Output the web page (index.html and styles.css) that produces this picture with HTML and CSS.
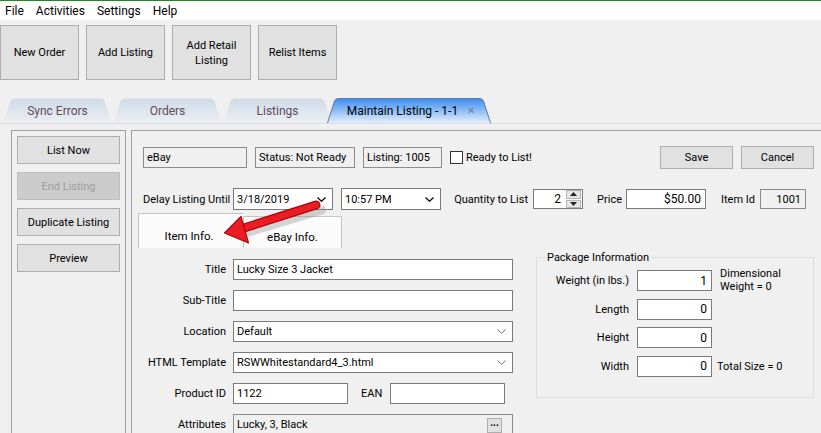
FILE: index.html
```html
<!DOCTYPE html>
<html lang="en">
<head>
  <meta charset="UTF-8" />
  <title>Maintain Listing</title>
  <link rel="stylesheet" href="styles.css">
</head>
<body>
  <div class="menubar">
    <span>File</span>
    <span>Activities</span>
    <span>Settings</span>
    <span>Help</span>
  </div>

  <div class="toolbar">
    <button class="tool">New Order</button>
    <button class="tool">Add Listing</button>
    <button class="tool">Add Retail<br>Listing</button>
    <button class="tool">Relist Items</button>
  </div>

  <div class="tabs">
    <div class="tab">
      <svg class="tab-shape" width="109" height="25" viewBox="0 0 109 25">
        <defs>
          <linearGradient id="tabIdle" x1="0" y1="0" x2="0" y2="1">
            <stop offset="0" stop-color="#cfdbe8"/>
            <stop offset="1" stop-color="#eceff3"/>
          </linearGradient>
          <linearGradient id="tabActive" x1="0" y1="0" x2="0" y2="1">
            <stop offset="0" stop-color="#3a8cf0"/>
            <stop offset="1" stop-color="#e4effc"/>
          </linearGradient>
        </defs>
        <path d="M0.5 25 L7.5 3 Q8.5 0.5 11.5 0.5 L97.5 0.5 Q100.5 0.5 101.5 3 L108.5 25 Z" fill="url(#tabIdle)"/>
      </svg>
      <span>Sync Errors</span>
    </div>
    <div class="tab">
      <svg class="tab-shape" width="109" height="25" viewBox="0 0 109 25">
        <path d="M0.5 25 L7.5 3 Q8.5 0.5 11.5 0.5 L97.5 0.5 Q100.5 0.5 101.5 3 L108.5 25 Z" fill="url(#tabIdle)"/>
      </svg>
      <span>Orders</span>
    </div>
    <div class="tab">
      <svg class="tab-shape" width="109" height="25" viewBox="0 0 109 25">
        <path d="M0.5 25 L7.5 3 Q8.5 0.5 11.5 0.5 L97.5 0.5 Q100.5 0.5 101.5 3 L108.5 25 Z" fill="url(#tabIdle)"/>
      </svg>
      <span>Listings</span>
    </div>
    <div class="tab active">
      <svg class="tab-shape" width="164" height="25" viewBox="0 0 164 25">
        <path d="M0.5 25 L7.5 3 Q8.5 0.5 11.5 0.5 L152.5 0.5 Q155.5 0.5 156.5 3 L163.5 25" fill="url(#tabActive)" stroke="#62799a"/>
      </svg>
      <span>Maintain Listing - 1-1</span>
      <span class="close">&#x2715;</span>
    </div>
  </div>
  <div class="tabline"></div>

  <div class="workspace">
    <aside class="side">
      <button class="btn">List Now</button>
      <button class="btn" disabled>End Listing</button>
      <button class="btn">Duplicate Listing</button>
      <button class="btn">Preview</button>
    </aside>

    <main class="editor">
      <div class="head">
        <div class="ro w-site">eBay</div>
        <div class="ro w-status">Status: Not Ready</div>
        <div class="ro w-listing">Listing: 1005</div>
        <label class="check"><span class="box"></span>Ready to List!</label>
        <button class="btn act save">Save</button>
        <button class="btn act">Cancel</button>
      </div>

      <div class="delay">
        <span class="lbl-delay">Delay Listing Until</span>
        <div class="select w-date">
          <span>3/18/2019</span>
          <svg width="9" height="5" viewBox="0 0 9 5"><path d="M0.5 0.5 L4.5 4.3 L8.5 0.5" fill="none" stroke="#111" stroke-width="1.3"/></svg>
        </div>
        <div class="select w-time">
          <span>10:57 PM</span>
          <svg width="9" height="5" viewBox="0 0 9 5"><path d="M0.5 0.5 L4.5 4.3 L8.5 0.5" fill="none" stroke="#111" stroke-width="1.3"/></svg>
        </div>
        <span class="lbl-qty">Quantity to List</span>
        <div class="spin">
          <span class="spin-val">2</span>
          <div class="spin-btns">
            <span class="spin-up"><svg width="7" height="4" viewBox="0 0 7 4"><path d="M0 4 L3.5 0 L7 4 Z" fill="#222"/></svg></span>
            <span class="spin-down"><svg width="7" height="4" viewBox="0 0 7 4"><path d="M0 0 L3.5 4 L7 0 Z" fill="#222"/></svg></span>
          </div>
        </div>
        <span class="lbl-price">Price</span>
        <div class="input num w-price">$50.00</div>
        <span class="lbl-id">Item Id</span>
        <div class="ro num w-id">1001</div>
      </div>

      <div class="subtabs">
        <div class="subtab selected">Item Info.</div>
        <div class="subtab">eBay Info.</div>
      </div>

      <div class="page">
        <div class="form">
          <label>Title</label>
          <div class="input">Lucky Size 3 Jacket</div>

          <label>Sub-Title</label>
          <div class="input"></div>

          <label>Location</label>
          <div class="select">
            <span>Default</span>
            <svg width="9" height="5" viewBox="0 0 9 5"><path d="M0.5 0.5 L4.5 4.3 L8.5 0.5" fill="none" stroke="#6a6a6a" stroke-width="1"/></svg>
          </div>

          <label>HTML Template</label>
          <div class="select">
            <span>RSWWhitestandard4_3.html</span>
            <svg width="9" height="5" viewBox="0 0 9 5"><path d="M0.5 0.5 L4.5 4.3 L8.5 0.5" fill="none" stroke="#6a6a6a" stroke-width="1"/></svg>
          </div>

          <label>Product ID</label>
          <div class="pair">
            <div class="input w-code">1122</div>
            <span class="lbl-ean">EAN</span>
            <div class="input w-code"></div>
          </div>

          <label>Attributes</label>
          <div class="ro attrs">
            <span>Lucky, 3, Black</span>
            <span class="dots">...</span>
          </div>
        </div>

        <fieldset class="package">
          <legend>Package Information</legend>
          <div class="pkg-grid">
            <label>Weight (in lbs.)</label>
            <div class="input num">1</div>
            <span class="note">Dimensional<br>Weight = 0</span>

            <label>Length</label>
            <div class="input num">0</div>
            <span></span>

            <label>Height</label>
            <div class="input num">0</div>
            <span></span>

            <label>Width</label>
            <div class="input num">0</div>
            <span class="note total">Total Size = 0</span>
          </div>
        </fieldset>
      </div>
    </main>
  </div>

  <svg class="pointer" width="821" height="433" viewBox="0 0 821 433">
    <path d="M247 230 L320 208" stroke="#8a8a8a" stroke-opacity="0.35" stroke-width="9" stroke-linecap="round" transform="translate(1.5 2)"/>
    <path d="M244 228 L316 205" stroke="#a8080c" stroke-width="9" stroke-linecap="round"/>
    <path d="M244 228 L316 205" stroke="#ec1c24" stroke-width="6.5" stroke-linecap="round"/>
    <path d="M224.5 233 L241 216.5 L248.5 243 Z" fill="#ec1c24" stroke="#a8080c" stroke-width="1.2" stroke-linejoin="round"/>
  </svg>
</body>
</html>
```

FILE: styles.css
```css
* {
  box-sizing: border-box;
}

html,
body {
  margin: 0;
  padding: 0;
}

body {
  font-family: Roboto, 'Noto Sans', sans-serif;
  font-size: 11px;
  color: #000;
  background-color: #f0f0f0;
  width: 821px;
  height: 433px;
  overflow: hidden;
  position: relative;
  white-space: nowrap;
}

/* Menu + toolbar */
.menubar {
  display: flex;
  align-items: center;
  gap: 12px;
  height: 20px;
  padding-left: 5px;
  background: #fff;
  border-top: 1px solid #1d8a1d;
  font-size: 12px;
}

.toolbar {
  display: flex;
  gap: 7px;
  padding-top: 5px;
}

button {
  font-family: inherit;
  font-size: 11px;
  color: #000;
  padding: 0;
  margin: 0;
}

.tool {
  width: 79px;
  height: 55px;
  line-height: 15px;
  background: #e1e1e1;
  border: 1px solid #adadad;
}

/* Document tabs */
.tabs {
  display: flex;
  gap: 1px;
  height: 25px;
  margin-top: 18px;
  padding-left: 3px;
}

.tab {
  position: relative;
  width: 109px;
  display: flex;
  align-items: center;
  justify-content: center;
  gap: 9px;
  font-size: 12px;
  color: #5e4c5c;
}

.tab span {
  position: relative;
}

.tab-shape {
  position: absolute;
  left: 0;
  top: 0;
}

.tab.active {
  width: 164px;
  margin-left: -6px;
  padding-left: 4px;
  color: #000;
}

.tab .close {
  font-size: 10px;
  color: #6f7f92;
}

.tabline {
  height: 1px;
  background: #d7dce3;
}

/* Workspace */
.workspace {
  display: flex;
  gap: 5px;
  height: 303px;
  margin-top: 6px;
  padding-left: 11px;
}

.side {
  width: 115px;
  display: flex;
  flex-direction: column;
  gap: 8px;
  padding: 5px;
  border: 1px solid #a0a0a0;
  border-bottom: none;
}

.btn {
  height: 28px;
  background: #e1e1e1;
  border: 1px solid #adadad;
}

.btn:disabled {
  background: #cccccc;
  border-color: #bfbfbf;
  color: #9d9d9d;
}

.editor {
  flex: 1;
  border-top: 1px solid #a0a0a0;
  border-left: 1px solid #a0a0a0;
}

/* Fields */
.ro,
.input,
.select {
  height: 21px;
  display: flex;
  align-items: center;
  padding: 0 3px;
  border: 1px solid #7a7a7a;
  background: #fff;
}

.ro {
  background: #f0f0f0;
  border-color: #8c8c8c;
}

.num {
  justify-content: flex-end;
  padding-right: 4px;
}

.select {
  justify-content: space-between;
  padding-right: 6px;
}

.head {
  display: flex;
  align-items: center;
  height: 23px;
  margin-top: 15px;
  padding: 0 7px 0 11px;
}

.head .ro {
  margin-right: 8px;
}

.w-site { width: 104px; }
.w-status { width: 100px; }
.w-listing { width: 79px; }

.check {
  display: flex;
  align-items: center;
  gap: 3px;
}

.box {
  width: 13px;
  height: 13px;
  border: 1px solid #333;
  background: #fff;
}

.act {
  width: 73px;
  height: 23px;
}

.save {
  margin-left: auto;
  margin-right: 8px;
}

.delay {
  display: flex;
  align-items: center;
  height: 22px;
  margin-top: 19px;
  padding-left: 11px;
}

.lbl-delay { width: 90px; }

.delay .select {
  height: 22px;
  width: 100px;
}

.w-date { margin-right: 8px; }

.lbl-qty {
  width: 92px;
  text-align: right;
  padding-right: 5px;
}

.spin {
  width: 50px;
  height: 20px;
  display: flex;
  align-items: center;
  border: 1px solid #7a7a7a;
  background: #fff;
}

.spin-val {
  flex: 1;
  text-align: right;
  padding-right: 5px;
  font-size: 12px;
}

.spin-btns {
  width: 16px;
  height: 18px;
  display: flex;
  flex-direction: column;
  gap: 1px;
  padding: 0 1px 0 0;
}

.spin-up,
.spin-down {
  flex: 1;
  display: flex;
  align-items: center;
  justify-content: center;
  background: #e6e6e6;
  border: 1px solid #b5b5b5;
}

.lbl-price {
  width: 43px;
  text-align: right;
  padding-right: 4px;
}

.w-price {
  width: 80px;
  height: 20px;
  font-size: 12px;
}

.lbl-id {
  width: 54px;
  text-align: right;
  padding-right: 5px;
}

.w-id {
  width: 46px;
  height: 20px;
}

/* Inner tabs */
.subtabs {
  display: flex;
  align-items: flex-end;
  height: 35px;
  margin-top: 3px;
  padding-left: 6px;
  font-size: 11.5px;
}

.subtab {
  width: 99px;
  height: 32px;
  display: flex;
  align-items: center;
  justify-content: center;
  padding-top: 9px;
  background: #fbfbfb;
  border: 1px solid #c4c4c4;
  border-bottom: none;
}

.subtab.selected {
  width: 105px;
  height: 35px;
  padding-top: 10px;
  padding-right: 4px;
  border-right: none;
}

/* Tab page */
.page {
  display: flex;
  align-items: flex-start;
  padding-top: 11px;
}

.form {
  display: grid;
  grid-template-columns: 94px 280px;
  grid-auto-rows: 21px;
  column-gap: 7px;
  row-gap: 10px;
}

.form label {
  text-align: right;
  line-height: 21px;
}

.pair {
  display: flex;
  align-items: center;
}

.w-code { width: 115px; }

.lbl-ean {
  width: 42px;
  padding-left: 13px;
}

.attrs {
  justify-content: space-between;
  padding-right: 10px;
}

.dots {
  width: 15px;
  height: 15px;
  margin-top: 2px;
  line-height: 8px;
  text-align: center;
  font-weight: bold;
  font-size: 10px;
  background: #e1e1e1;
  border: 1px solid #adadad;
}

.package {
  width: 278px;
  margin: -8px 0 0 23px;
  padding: 0 0 20px 0;
  border: 1px solid #dcdcdc;
}

.package legend {
  margin-left: 8px;
  padding: 0 2px;
}

.pkg-grid {
  display: grid;
  grid-template-columns: 92px 75px auto;
  grid-auto-rows: 21px;
  column-gap: 8px;
  row-gap: 7.5px;
  padding-top: 6px;
}

.pkg-grid label {
  text-align: right;
  line-height: 21px;
}

.pkg-grid .input {
  font-size: 12px;
}

.note {
  line-height: 13px;
  margin-top: -3px;
}

.note.total {
  line-height: 21px;
  margin: 0 0 0 -3px;
}

/* Callout arrow drawn over the form */
.pointer {
  position: absolute;
  left: 0;
  top: 0;
  pointer-events: none;
}
```
